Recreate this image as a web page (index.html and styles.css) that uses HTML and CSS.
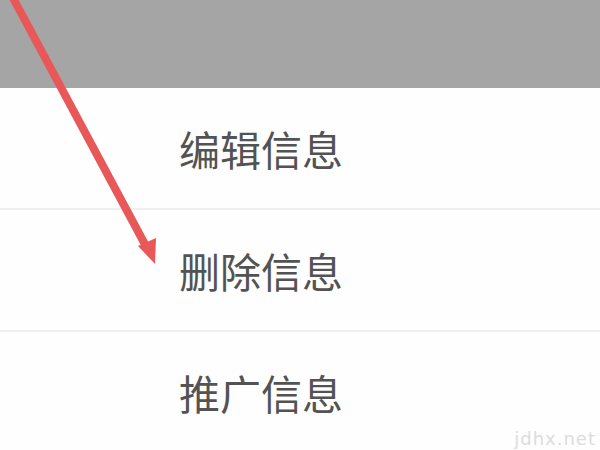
FILE: index.html
```html
<!DOCTYPE html>
<html lang="zh">
<head>
    <meta charset="UTF-8">
    <link rel="stylesheet" href="styles.css">
</head>
<body>
<div class="screen">
    <div class="topbar"></div>
    <ul class="menu">
        <li class="menu-item">编辑信息</li>
        <li class="menu-item">删除信息</li>
        <li class="menu-item">推广信息</li>
    </ul>
    <svg class="arrow" width="600" height="450" viewBox="0 0 600 450">
        <line x1="12" y1="-4" x2="148" y2="250" stroke="#e95858" stroke-width="8" stroke-linecap="round"/>
        <polygon points="138,246 156,238 155,264" fill="#e95858"/>
    </svg>
    <div class="watermark">jdhx.net</div>
</div>
</body>
</html>
```
FILE: styles.css
```css
html, body {
    margin: 0;
    padding: 0;
}
body {
    background: #fff;
    font-family: "Noto Sans CJK SC", "Noto Sans", sans-serif;
}
.screen {
    position: relative;
    width: 600px;
    height: 450px;
    overflow: hidden;
    background: #fefefe;
}
.topbar {
    height: 88px;
    background-color: #a5a5a5;
}
.menu {
    list-style: none;
    margin: 0;
    padding: 0;
}
.menu-item {
    height: 120px;
    display: flex;
    align-items: center;
    padding-left: 179px;
    font-size: 41px;
    color: #535353;
    border-bottom: 2px solid #efefef;
    letter-spacing: 0;
}
.arrow {
    position: absolute;
    top: 0;
    left: 0;
}
.watermark {
    position: absolute;
    right: 4px;
    bottom: 1px;
    font-family: "DejaVu Sans", sans-serif;
    font-size: 18px;
    color: #dcdcdc;
    letter-spacing: 1px;
}
```
